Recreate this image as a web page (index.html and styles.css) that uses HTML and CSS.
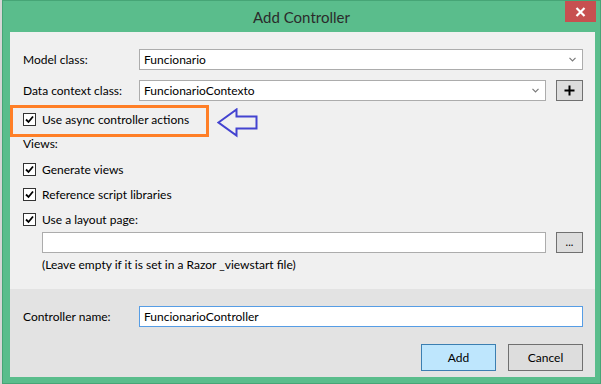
FILE: index.html
```html
<!DOCTYPE html>
<html>
<head>
<meta charset="utf-8">
<link rel="stylesheet" href="styles.css">
</head>
<body>
<div class="window">
  <div class="titlebar">
    <span></span>
    <span class="title">Add Controller</span>
    <span class="close-wrap">
      <span class="close"><svg width="11" height="10" viewBox="0 0 11 10"><path d="M1.5 1 L9.5 9 M9.5 1 L1.5 9" stroke="#fff" stroke-width="2.2" fill="none"/></svg></span>
    </span>
  </div>
  <div class="content">
    <div class="upper">
      <div class="field-row">
        <span class="lbl">Model class:</span>
        <div class="combo"><span class="val">Funcionario</span><svg class="chev" width="7" height="5" viewBox="0 0 7 5"><path d="M0.5 0.8 L3.5 3.8 L6.5 0.8" stroke="#7a7a7a" stroke-width="1.2" fill="none"/></svg></div>
      </div>
      <div class="field-row gap10">
        <span class="lbl">Data context class:</span>
        <div class="combo"><span class="val">FuncionarioContexto</span><svg class="chev" width="7" height="5" viewBox="0 0 7 5"><path d="M0.5 0.8 L3.5 3.8 L6.5 0.8" stroke="#7a7a7a" stroke-width="1.2" fill="none"/></svg></div>
        <span class="sq-btn"><svg width="11" height="11" viewBox="0 0 11 11"><path d="M5.5 0.5 V10.5 M0.5 5.5 H10.5" stroke="#000" stroke-width="2" fill="none"/></svg></span>
      </div>
      <div class="async-row">
        <div class="highlight">
          <div class="check short"><span class="cb"><svg width="11" height="11" viewBox="0 0 11 11"><path d="M2 5.5 L4.5 8 L9 2.5" stroke="#000" stroke-width="1.8" fill="none"/></svg></span><span>Use async controller actions</span></div>
        </div>
        <svg class="arrow" width="42" height="30" viewBox="0 0 42 30"><path d="M1.5 14.5 L19.5 1.5 L19.5 8.5 L39.5 8.5 L39.5 20.5 L19.5 20.5 L19.5 27.5 Z" stroke="#4343d0" stroke-width="2" fill="none" stroke-linejoin="miter"/></svg>
      </div>
      <div class="section">Views:</div>
      <div class="check"><span class="cb"><svg width="11" height="11" viewBox="0 0 11 11"><path d="M2 5.5 L4.5 8 L9 2.5" stroke="#000" stroke-width="1.8" fill="none"/></svg></span><span>Generate views</span></div>
      <div class="check"><span class="cb"><svg width="11" height="11" viewBox="0 0 11 11"><path d="M2 5.5 L4.5 8 L9 2.5" stroke="#000" stroke-width="1.8" fill="none"/></svg></span><span>Reference script libraries</span></div>
      <div class="check"><span class="cb"><svg width="11" height="11" viewBox="0 0 11 11"><path d="M2 5.5 L4.5 8 L9 2.5" stroke="#000" stroke-width="1.8" fill="none"/></svg></span><span>Use a layout page:</span></div>
      <div class="layout-row">
        <div class="text-input"></div>
        <span class="sq-btn dots">...</span>
      </div>
      <div class="note">(Leave empty if it is set in a Razor _viewstart file)</div>
    </div>
    <div class="lower">
      <div class="field-row">
        <span class="lbl">Controller name:</span>
        <div class="text-input focused"><span class="val">FuncionarioController</span></div>
      </div>
      <div class="buttons">
        <span class="btn primary">Add</span>
        <span class="btn">Cancel</span>
      </div>
    </div>
  </div>
</div>
</body>
</html>
```

FILE: styles.css
```css
* { box-sizing: border-box; }
html, body { margin: 0; padding: 0; }
body {
  width: 601px;
  height: 384px;
  overflow: hidden;
  background: #d6d6d6;
  font-family: "Lato", "Liberation Sans", sans-serif;
  font-size: 12px;
  color: #000;
  padding-left: 2px;
}
.window {
  width: 599px;
  height: 384px;
  background: #5abd8c;
  border: 1px solid #46a576;
  display: flex;
  flex-direction: column;
}
.titlebar {
  height: 31px;
  flex: none;
  display: grid;
  grid-template-columns: 1fr auto 1fr;
  align-items: start;
}
.title {
  font-size: 15px;
  color: #2b2b2b;
  padding-top: 7px;
  line-height: 18px;
}
.close-wrap {
  display: flex;
  justify-content: flex-end;
  padding-right: 4px;
}
.close {
  width: 31px;
  height: 21px;
  background: #c75050;
  display: flex;
  align-items: center;
  justify-content: center;
}
.content {
  flex: 1;
  margin: 0 5px 6px 7px;
  display: flex;
  flex-direction: column;
}
.upper {
  flex: 1;
  background: #f0f0f0;
  padding: 17px 12px 0 13px;
}
.lower {
  height: 88px;
  flex: none;
  background: #e3e3e3;
  padding: 17px 12px 6px 13px;
}
.field-row {
  display: flex;
  align-items: center;
  height: 21px;
}
.gap10 { margin-top: 10px; }
.lbl {
  width: 116px;
  flex: none;
  line-height: 15px;
}
.combo, .text-input {
  flex: 1;
  height: 21px;
  background: #fff;
  border: 1px solid #acacac;
  display: flex;
  align-items: center;
  padding-left: 4px;
  padding-right: 6px;
}
.val { flex: 1; line-height: 15px; }
.chev { flex: none; }
.sq-btn {
  width: 27px;
  height: 21px;
  flex: none;
  margin-left: 10px;
  background: #dddddd;
  border: 1px solid #707070;
  display: flex;
  align-items: center;
  justify-content: center;
}
.dots {
  font-size: 11px;
  line-height: 11px;
  letter-spacing: 0;
  padding-bottom: 2px;
}
.async-row {
  display: flex;
  align-items: flex-start;
  margin-top: 4px;
  margin-left: -13px;
}
.highlight {
  width: 199px;
  height: 32px;
  border: 3px solid #ff7f27;
  padding-left: 10px;
}
.arrow {
  margin-left: 8px;
  margin-top: 3px;
}
.section {
  line-height: 15px;
  margin-top: -2px;
  margin-bottom: 6px;
}
.check {
  display: flex;
  align-items: center;
  height: 25px;
  line-height: 15px;
}
.check.short { height: 23px; }
.cb {
  width: 13px;
  height: 13px;
  flex: none;
  border: 1px solid #333;
  background: #fff;
  margin-right: 6px;
  display: flex;
  align-items: center;
  justify-content: center;
}
.layout-row {
  display: flex;
  height: 21px;
  padding-left: 19px;
}
.note {
  margin-top: 4px;
  padding-left: 19px;
  line-height: 15px;
}
.text-input.focused { border-color: #569de5; }
.buttons {
  display: flex;
  justify-content: flex-end;
  gap: 12px;
  margin-top: 17px;
}
.btn {
  width: 75px;
  height: 27px;
  background: #dddddd;
  border: 1px solid #707070;
  display: flex;
  align-items: center;
  justify-content: center;
  line-height: 15px;
}
.btn.primary {
  background: #bee6fd;
  border-color: #3c7fb1;
}
```
